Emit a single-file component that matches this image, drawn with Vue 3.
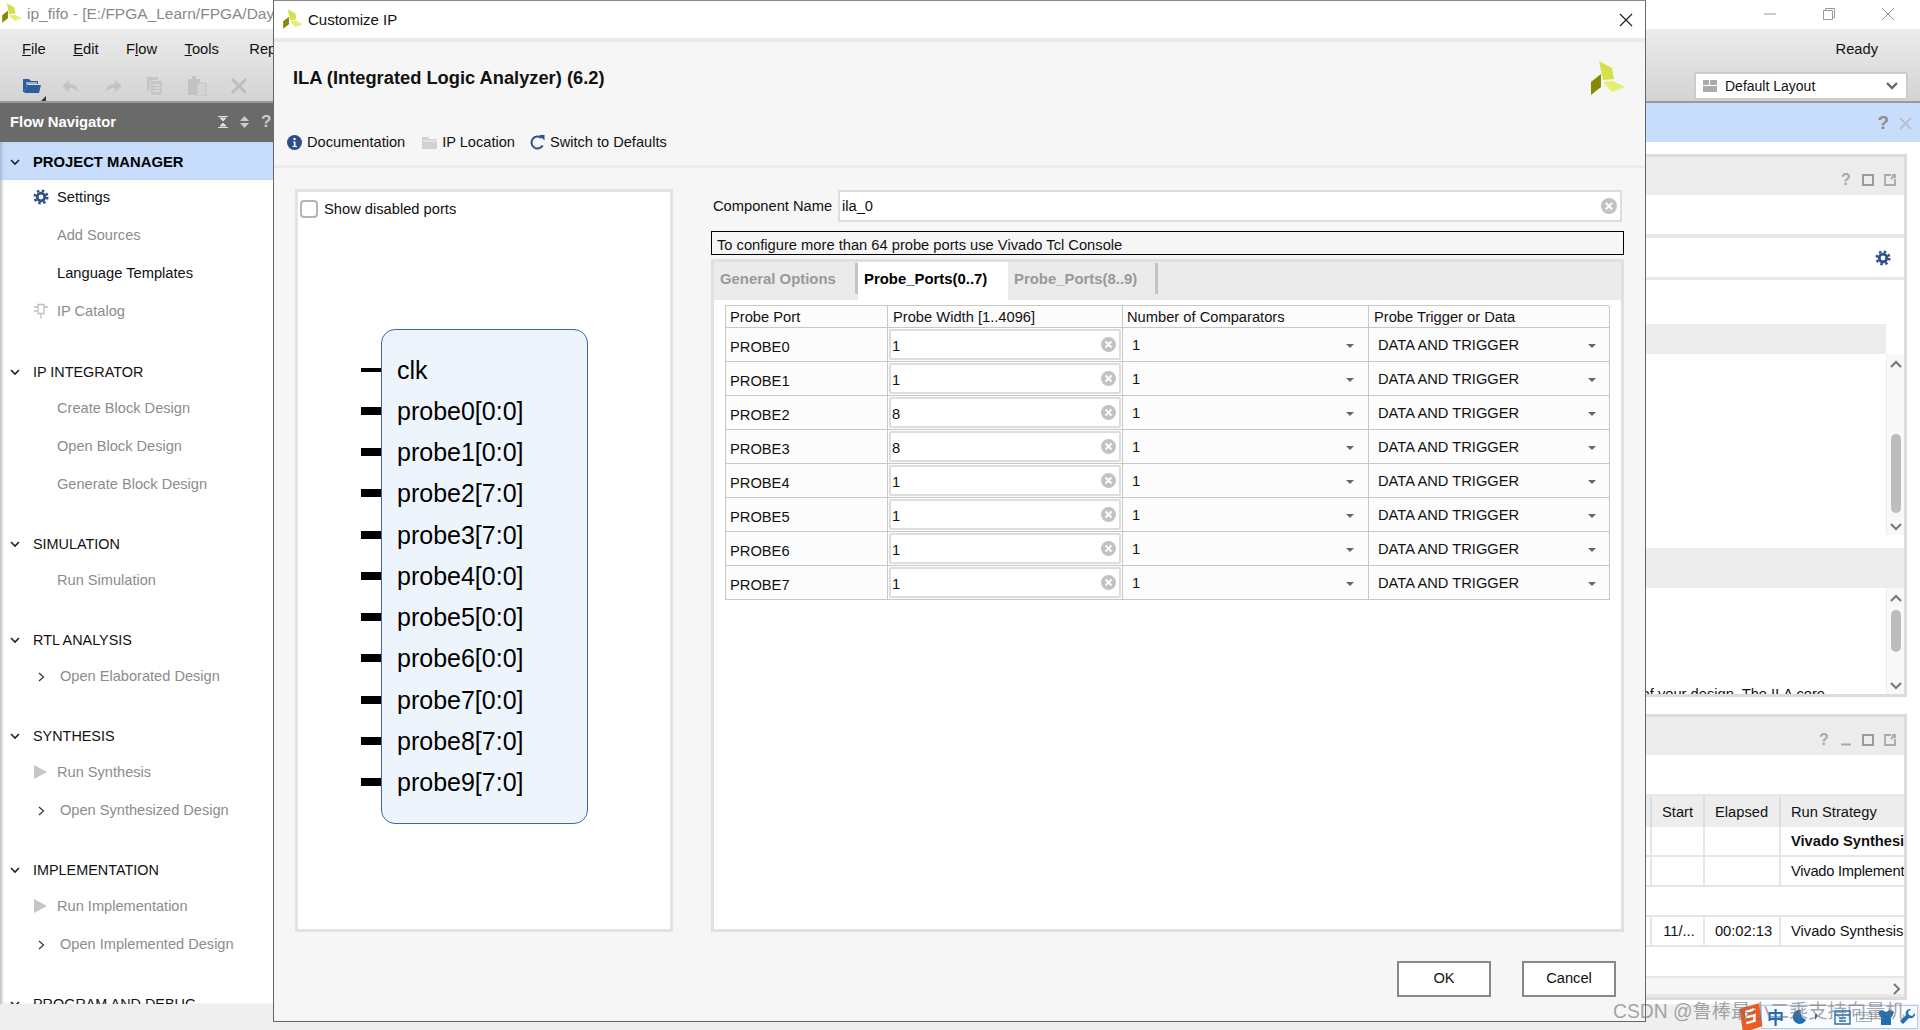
<script setup>
const sections = [
  { title: 'IP INTEGRATOR', items: [{ t: 'Create Block Design' }, { t: 'Open Block Design' }, { t: 'Generate Block Design' }] },
  { title: 'SIMULATION', items: [{ t: 'Run Simulation' }] },
  { title: 'RTL ANALYSIS', items: [{ t: 'Open Elaborated Design', k: 'arrow' }] },
  { title: 'SYNTHESIS', items: [{ t: 'Run Synthesis', k: 'play' }, { t: 'Open Synthesized Design', k: 'arrow' }] },
  { title: 'IMPLEMENTATION', items: [{ t: 'Run Implementation', k: 'play' }, { t: 'Open Implemented Design', k: 'arrow' }] },
  { title: 'PROGRAM AND DEBUG', items: [] }
]
const pins = [
  { n: 'clk', thin: true }, { n: 'probe0[0:0]' }, { n: 'probe1[0:0]' }, { n: 'probe2[7:0]' }, { n: 'probe3[7:0]' },
  { n: 'probe4[0:0]' }, { n: 'probe5[0:0]' }, { n: 'probe6[0:0]' }, { n: 'probe7[0:0]' }, { n: 'probe8[7:0]' }, { n: 'probe9[7:0]' }
]
const probes = [1, 1, 8, 8, 1, 1, 1, 1].map((w, i) => ({ name: 'PROBE' + i, width: w }))
</script>

<template>
  <div class="app">
    <header class="titlebar">
      <svg class="logo-main" viewBox="9 9 38 38"><polygon points="19,11 32,18 34,29 23,30" fill="#d6e04c"/><polygon points="23,32 33,31 45,37 32,42" fill="#e6ee70"/><polygon points="11,32 21,24 21,37 11,45" fill="#858a00"/></svg>
      <span class="win-title">ip_fifo - [E:/FPGA_Learn/FPGA/Day</span>
      <div class="winbtns">
        <svg width="14" height="14" viewBox="0 0 14 14"><path d="M1 7h12" stroke="#999" fill="none"/></svg>
        <svg width="14" height="14" viewBox="0 0 14 14"><path d="M1.5 3.5h9v9h-9zM3.5 3.5v-2h9v9h-2" stroke="#999" fill="none"/></svg>
        <svg width="14" height="14" viewBox="0 0 14 14"><path d="M1 1l12 12M13 1L1 13" stroke="#999" fill="none"/></svg>
      </div>
    </header>

    <div class="chrome">
      <div class="menurow">
        <nav class="menu">
          <span><u>F</u>ile</span><span><u>E</u>dit</span><span>F<u>l</u>ow</span><span><u>T</u>ools</span><span class="rep">Rep</span>
        </nav>
        <span class="ready">Ready</span>
      </div>
      <div class="iconrow">
        <div class="tools">
          <span class="folder-wrap">
            <svg width="20" height="20" viewBox="0 0 20 20"><path d="M1 3h6l2 2h7v3H5L3 16H1z" fill="#2f5c9c"/><path d="M5 9h14l-2 8H2.500z" fill="#2f5c9c"/><path d="M4 7h11" stroke="#fff"/></svg>
            <i class="corner"></i>
          </span>
          <svg class="undo" width="20" height="20" viewBox="0 0 20 20"><path d="M8 4L1 10l7 6v-4c4 0 7 1 9 4 0-6-3-8-9-8z" fill="#c4c4c4"/></svg>
          <svg width="20" height="20" viewBox="0 0 20 20"><path d="M12 4l7 6-7 6v-4c-4 0-7 1-9 4 0-6 3-8 9-8z" fill="#c4c4c4"/></svg>
          <svg width="20" height="20" viewBox="0 0 20 20"><path d="M2 1h11v14H2z" fill="#c6c6c6"/><path d="M5.500 4.500h12v15h-12z" fill="#c6c6c6" stroke="#d8d8d8"/><path d="M8 9h7M8 12h7M8 15h7" stroke="#e2e2e2"/></svg>
          <svg width="20" height="20" viewBox="0 0 20 20"><path d="M1 3h12v16H1z" fill="#c2c2c2"/><path d="M5 0h4v4H5z" fill="#c2c2c2"/><path d="M10 7h9v13h-9z" fill="#d4d4d4" stroke="#c2c2c2"/></svg>
          <svg width="20" height="20" viewBox="0 0 20 20"><path d="M3 3l14 14M17 3L3 17" stroke="#bdbdbd" stroke-width="3" fill="none"/></svg>
          <i class="green"></i>
        </div>
        <div class="layout-combo">
          <svg width="14" height="12" viewBox="0 0 14 12"><path d="M0 0h6v5H0zM7 0h7v5H7zM0 6h14v6H0z" fill="#aaa"/></svg>
          <span>Default Layout</span>
          <svg class="combo-chev" width="14" height="10" viewBox="0 0 14 10"><path d="M2 2l5 5 5-5" stroke="#666" stroke-width="2.400" fill="none"/></svg>
        </div>
      </div>
    </div>

    <main class="body">
      <aside class="nav">
        <div class="nav-head">
          <b>Flow Navigator</b>
          <div class="nav-tools">
            <svg width="10" height="12" viewBox="0 0 10 12"><path d="M0 .5h10M0 11.500h10M5 5L2 2h6zM5 7l-3 3h6z" stroke="#ddd" fill="#ddd" stroke-width="1"/></svg>
            <svg width="9" height="12" viewBox="0 0 9 12"><path d="M4.500 0L9 5H0zM4.500 12L0 7h9z" fill="#ccc"/></svg>
            <b class="q">?</b>
          </div>
        </div>
        <div class="nav-list">
          <div class="sec-head active">
            <svg class="chev" width="10" height="7" viewBox="0 0 10 7"><path d="M1 1l4 4 4-4" stroke="#222" stroke-width="1.600" fill="none"/></svg>
            <b>PROJECT MANAGER</b>
          </div>
          <div class="items first">
            <div class="item dark">
              <svg class="lead" width="16" height="16" viewBox="0 0 16 16"><circle cx="8" cy="8" r="6.300" fill="none" stroke="#2d4f8b" stroke-width="2.500" stroke-dasharray="2.470 2.480"/><circle cx="8" cy="8" r="3.800" fill="none" stroke="#2d4f8b" stroke-width="2.800"/></svg>
              <span>Settings</span>
            </div>
            <div class="item">Add Sources</div>
            <div class="item dark">Language Templates</div>
            <div class="item">
              <svg class="lead" width="16" height="16" viewBox="0 0 16 16"><path d="M5 1.500h6v9H5zM8 10.500v5M1 4h4M1 8h4M11 4h4" stroke="#c0c0c0" stroke-width="1.300" fill="none"/></svg>
              <span>IP Catalog</span>
            </div>
          </div>
          <section v-for="s in sections" :key="s.title" class="sec">
            <div class="sec-head">
              <svg class="chev" width="10" height="7" viewBox="0 0 10 7"><path d="M1 1l4 4 4-4" stroke="#222" stroke-width="1.600" fill="none"/></svg>
              <span>{{ s.title }}</span>
            </div>
            <div v-for="it in s.items" :key="it.t" class="item" :class="{ arrowed: it.k === 'arrow' }">
              <svg v-if="it.k === 'play'" class="lead play" width="13" height="14" viewBox="0 0 13 14"><path d="M0 0l13 7-13 7z" fill="#c6c6c6"/></svg>
              <svg v-if="it.k === 'arrow'" class="lead-arrow" width="7" height="10" viewBox="0 0 7 10"><path d="M1 1l4.500 4L1 9" stroke="#333" stroke-width="1.200" fill="none"/></svg>
              <span>{{ it.t }}</span>
            </div>
          </section>
        </div>
      </aside>

      <div class="workspace">
        <div class="blue-band">
          <b class="bq">?</b>
          <svg width="13" height="13" viewBox="0 0 13 13"><path d="M1 1l11 11M12 1L1 12" stroke="#b8bfca" stroke-width="2" fill="none"/></svg>
        </div>
        <div class="panels">
          <section class="panel p1">
            <div class="phead">
              <b class="pq">?</b>
              <svg width="12" height="12" viewBox="0 0 12 12"><path d="M1 1h10v10H1z" stroke="#999" stroke-width="2" fill="none"/></svg>
              <svg width="12" height="12" viewBox="0 0 12 12"><path d="M7 1H1v10h10V5M7 5l4-4M8 1h3v3" stroke="#aaa" stroke-width="1.800" fill="none"/></svg>
            </div>
            <div class="blank h39 sepb4"></div>
            <div class="gear-row">
              <svg width="16" height="16" viewBox="0 0 16 16"><circle cx="8" cy="8" r="6.300" fill="none" stroke="#2d4f8b" stroke-width="2.500" stroke-dasharray="2.470 2.480"/><circle cx="8" cy="8" r="3.800" fill="none" stroke="#2d4f8b" stroke-width="2.800"/></svg>
            </div>
            <div class="blank h44"></div>
            <div class="greyrow"></div>
            <div class="scrollarea a1">
              <div class="scroll-content"></div>
              <div class="sbar">
                <svg class="sb-chev" width="14" height="8" viewBox="0 0 14 8"><path d="M2 7l5-5 5 5" stroke="#777" stroke-width="2" fill="none"/></svg>
                <i class="thumb t1"></i>
                <svg class="sb-chev end" width="14" height="8" viewBox="0 0 14 8"><path d="M2 1l5 5 5-5" stroke="#777" stroke-width="2" fill="none"/></svg>
              </div>
            </div>
            <div class="blank h13"></div>
            <div class="grey40"></div>
            <div class="scrollarea a2">
              <div class="scroll-content desc"><span>of your design. The ILA core</span></div>
              <div class="sbar">
                <svg class="sb-chev" width="14" height="8" viewBox="0 0 14 8"><path d="M2 7l5-5 5 5" stroke="#777" stroke-width="2" fill="none"/></svg>
                <i class="thumb t2"></i>
                <svg class="sb-chev end" width="14" height="8" viewBox="0 0 14 8"><path d="M2 1l5 5 5-5" stroke="#777" stroke-width="2" fill="none"/></svg>
              </div>
            </div>
          </section>

          <section class="panel p2">
            <div class="phead">
              <b class="pq">?</b>
              <svg width="12" height="12" viewBox="0 0 12 12"><path d="M1 10.500h10" stroke="#aaa" stroke-width="2" fill="none"/></svg>
              <svg width="12" height="12" viewBox="0 0 12 12"><path d="M1 1h10v10H1z" stroke="#999" stroke-width="2" fill="none"/></svg>
              <svg width="12" height="12" viewBox="0 0 12 12"><path d="M7 1H1v10h10V5M7 5l4-4M8 1h3v3" stroke="#aaa" stroke-width="1.800" fill="none"/></svg>
            </div>
            <div class="blank h39 sepb3"></div>
            <div class="runs">
              <div class="rrow rh"><span></span><span>Start</span><span>Elapsed</span><span>Run Strategy</span></div>
              <div class="rrow"><span></span><span></span><span></span><b>Vivado Synthesis</b></div>
              <div class="rrow"><span></span><span></span><span></span><span class="tight">Vivado Implementation</span></div>
              <div class="rrow empty"></div>
              <div class="rrow"><span></span><span class="ctr">11/...</span><span class="ctr">00:02:13</span><span>Vivado Synthesis</span></div>
            </div>
            <div class="blank h31"></div>
            <div class="hscroll">
              <svg width="8" height="12" viewBox="0 0 8 12"><path d="M1 1l5 5-5 5" stroke="#777" stroke-width="2" fill="none"/></svg>
            </div>
          </section>
        </div>
      </div>
    </main>
    <footer class="statusbar"></footer>

    <div class="dialog">
      <div class="dlg-title">
        <svg class="logo-small" viewBox="9 9 38 38"><polygon points="19,11 32,18 34,29 23,30" fill="#d6e04c"/><polygon points="23,32 33,31 45,37 32,42" fill="#e6ee70"/><polygon points="11,32 21,24 21,37 11,45" fill="#858a00"/></svg>
        <span>Customize IP</span>
        <svg class="dlg-close" width="14" height="14" viewBox="0 0 14 14"><path d="M1 1l12 12M13 1L1 13" stroke="#222" stroke-width="1.200" fill="none"/></svg>
      </div>
      <div class="dlg-head">
        <div class="dlg-h1">
          <h1>ILA (Integrated Logic Analyzer) (6.2)</h1>
          <svg class="logo-big" width="60" height="60" viewBox="0 0 60 60"><polygon points="19,11 32,18 34,29 23,30" fill="#d6e04c"/><polygon points="23,32 33,31 45,37 32,42" fill="#e6ee70"/><polygon points="11,32 21,24 21,37 11,45" fill="#858a00"/></svg>
        </div>
        <div class="dlg-links">
          <span class="lnk"><svg width="15" height="15" viewBox="0 0 15 15"><circle cx="7.500" cy="7.500" r="7.500" fill="#2d4f8b"/><path d="M6.500 3h2v2h-2zM6 6.500h2.500V11H10v1H5.500v-1H6.800V7.500H6z" fill="#fff"/></svg>Documentation</span>
          <span class="lnk"><svg width="15" height="13" viewBox="0 0 15 13"><path d="M0 1h6l1.500 2H15v10H0z" fill="#d2d2d2"/><path d="M1 5h14" stroke="#f2f2f2"/></svg>IP Location</span>
          <span class="lnk sw"><svg width="15" height="15" viewBox="0 0 15 15"><path d="M12.700 10.500A6 6 0 1 1 11.500 3" stroke="#2d4f8b" stroke-width="2" fill="none"/><path d="M9 0h5.500v5.500z" fill="#2d4f8b"/></svg>Switch to Defaults</span>
        </div>
      </div>

      <div class="dlg-body">
        <div class="sym-panel">
          <label class="show"><i class="cbx"></i><span>Show disabled ports</span></label>
          <div class="block">
            <div v-for="p in pins" :key="p.n" class="pin">
              <i class="wire" :class="{ thin: p.thin }"></i>
              <span>{{ p.n }}</span>
            </div>
          </div>
        </div>

        <div class="cfg">
          <div class="name-row">
            <span class="name-l">Component Name</span>
            <div class="field">
              <span>ila_0</span>
              <svg class="clr" width="16" height="16" viewBox="0 0 15 15"><circle cx="7.500" cy="7.500" r="7.500" fill="#c2c2c2"/><path d="M4.500 4.500l6 6M10.500 4.500l-6 6" stroke="#fff" stroke-width="1.800"/></svg>
            </div>
          </div>
          <div class="msg">To configure more than 64 probe ports use Vivado Tcl Console</div>
          <div class="tabs">
            <div class="tabstrip">
              <div class="tab">General Options</div>
              <div class="tab on">Probe_Ports(0..7)</div>
              <div class="tab">Probe_Ports(8..9)</div>
            </div>
            <div class="tabbody">
              <div class="grid">
                <div class="c ch">Probe Port</div>
                <div class="c ch">Probe Width [1..4096]</div>
                <div class="c ch">Number of Comparators</div>
                <div class="c ch">Probe Trigger or Data</div>
                <template v-for="p in probes" :key="p.name">
                  <div class="c cn">{{ p.name }}</div>
                  <div class="c cw">
                    <div class="winput">
                      <span>{{ p.width }}</span>
                      <svg width="15" height="15" viewBox="0 0 15 15"><circle cx="7.500" cy="7.500" r="7.500" fill="#c2c2c2"/><path d="M4.500 4.500l6 6M10.500 4.500l-6 6" stroke="#fff" stroke-width="1.800"/></svg>
                    </div>
                  </div>
                  <div class="c cs c3"><span>1</span><i class="tri"></i></div>
                  <div class="c cs c4"><span>DATA AND TRIGGER</span><i class="tri"></i></div>
                </template>
              </div>
            </div>
          </div>
        </div>
      </div>

      <div class="dlg-foot">
        <button class="btn" type="button">OK</button>
        <button class="btn" type="button">Cancel</button>
      </div>
    </div>

    <div class="ime">
      <svg class="sogou" width="28" height="32" viewBox="0 0 22 28"><path d="M1 6L18 1l3 20-17 6z" fill="#ef5a22"/><path d="M15 6L7 8.500v5l7-2v5l-7 2" stroke="#fff" stroke-width="2.200" fill="none"/></svg>
      <span class="zh">中</span>
      <svg width="16" height="16" viewBox="0 0 16 16"><path d="M10 1a7 7 0 1 0 5 10A8 8 0 0 1 10 1z" fill="#1f6fb5"/></svg>
      <svg width="6" height="12" viewBox="0 0 6 12"><path d="M2 3h2v3L2 9z" fill="#1f6fb5"/></svg>
      <svg class="ime-grid" width="17" height="15" viewBox="0 0 17 15"><path d="M1 1h15v13H1zM1 5h15M5 8h7M5 11h7" stroke="#1f6fb5" stroke-width="1.400" fill="none"/></svg>
      <svg class="ime-kb" width="16" height="10" viewBox="0 0 16 10"><path d="M.5.500h15v9H.500zM3 3h10M4 6.500h8" stroke="#9db4c8" fill="none"/></svg>
      <svg width="16" height="15" viewBox="0 0 16 15"><path d="M0 2l4-2 4 2 4-2 4 2-2 5h-1v8H3V7H2z" fill="#1f6fb5"/></svg>
      <svg width="16" height="16" viewBox="0 0 16 16"><path d="M15 4l-3 3-3-1-1-3 3-3a4.500 4.500 0 0 0-5 6L0 12l3 3 6-6a4.500 4.500 0 0 0 6-5z" fill="#1f6fb5"/></svg>
    </div>
    <div class="wm">CSDN @鲁棒最小二乘支持向量机</div>
  </div>
</template>

<style>
html, body { margin: 0; padding: 0; overflow: hidden; }
</style>

<style scoped>
.app {
  position: relative; width: 1920px; height: 1030px; overflow: hidden;
  display: flex; flex-direction: column; background: #fff; color: #111;
  font: 14.7px/1.2 "Liberation Sans", Arial, sans-serif;
}
svg { display: block; flex: none; }
b { font-weight: 700; }

.titlebar { height: 29px; display: flex; align-items: center; flex: none; background: #fff; }
.logo-main { width: 22px; height: 22px; margin-left: 1px; margin-top: -4px; }
.win-title { margin-left: 4px; color: #8a8a8a; font-size: 15.500px; white-space: nowrap; }
.winbtns { margin-left: auto; display: flex; gap: 45px; margin-right: 25px; margin-top: -1px; }

.chrome { height: 74px; flex: none; background: linear-gradient(#ececec, #d3d3d3); border-bottom: 2px solid #9a9a9a; box-sizing: border-box; }
.menurow { height: 38px; box-sizing: border-box; display: flex; align-items: center; padding: 4px 42px 0 22px; justify-content: space-between; }
.menu { display: flex; gap: 27.500px; }
.menu span { white-space: nowrap; }
.menu .rep { margin-left: 3px; }
.iconrow { height: 34px; display: flex; justify-content: space-between; padding-right: 12px; }
.tools { display: flex; gap: 22px; padding-left: 22px; align-items: center; height: 38px; }
.folder-wrap { position: relative; display: block; }
.corner { position: absolute; right: -4px; bottom: -5px; width: 0; height: 0; border-left: 5px solid transparent; border-bottom: 5px solid #333; }
.undo { margin-left: -3px; }
.green { width: 3px; height: 20px; background: #4caf2b; margin-left: 3px; }
.layout-combo {
  width: 214px; height: 28px; box-sizing: border-box; margin-top: 5px; background: #fff;
  border: 2px solid #ccc; border-radius: 2px; display: flex; align-items: center; padding-left: 7px; gap: 8px; font-size: 14px;
}
.combo-chev { margin-left: auto; margin-right: 7px; }

.body { flex: 1; min-height: 0; display: flex; }
.nav { width: 273px; flex: none; display: flex; flex-direction: column; box-shadow: inset 3px 0 3px -1px #bcbcbc; }
.nav-head { height: 39px; box-sizing: border-box; flex: none; background: #6a6a6a; color: #fff; display: flex; align-items: center; padding-left: 10px; font-size: 14.800px; }
.nav-tools { margin-left: auto; display: flex; align-items: center; gap: 12px; width: 55px; }
.q { font-size: 17px; color: #ccc; }
.nav-list { flex: 1; min-height: 0; overflow: hidden; }
.sec-head { height: 34px; box-sizing: border-box; display: flex; align-items: center; padding-left: 10px; color: #111; white-space: nowrap; font-size: 14.400px; }
.sec-head span, .sec-head b { margin-left: 13px; padding-top: 2px; }
.sec-head.active { height: 38px; padding-top: 2px; background: #c8dcfb; box-shadow: inset 3px 0 3px -1px #a9b9d0; font-size: 14.800px; color: #000; }
.chev { width: 10px; }
.sec { margin-bottom: 24px; }
.sec:first-of-type { margin-top: 25px; }
.items.first { margin-top: -2px; }
.item { height: 38px; box-sizing: border-box; padding-top: 2px; display: flex; align-items: center; padding-left: 57px; color: #8c8c8c; white-space: nowrap; position: relative; font-size: 14.600px; }
.item.dark { color: #111; font-size: 14.700px; }
.item.arrowed { padding-left: 60px; }
.lead { position: absolute; left: 33px; top: 11px; }
.lead.play { left: 34px; top: 12px; }
.lead-arrow { position: absolute; left: 38px; top: 15px; }

.workspace { flex: 1; min-width: 0; display: flex; flex-direction: column; }
.blue-band { height: 39px; box-sizing: border-box; padding-top: 1px; flex: none; background: #c8dcfb; display: flex; align-items: center; justify-content: flex-end; padding-right: 8px; gap: 10px; }
.bq { color: #8c8c8c; font-size: 19px; }
.panels { flex: 1; display: flex; flex-direction: column; padding: 12px 13px 4px 60px; gap: 17px; }
.panel { border: 3px solid #dcdcdc; display: flex; flex-direction: column; background: #fff; box-sizing: border-box; }
.p1 { height: 543px; }
.p2 { height: 286px; }
.phead { height: 38px; flex: none; background: #ececec; display: flex; align-items: center; justify-content: flex-end; padding-right: 8px; gap: 10px; padding-top: 8px; box-sizing: border-box; }
.pq { color: #a8a8a8; font-size: 16px; width: 12px; margin-right: -1px; }
.blank { flex: none; background: #fff; box-sizing: content-box; }
.h39 { height: 39px; }
.h44 { height: 44px; }
.h13 { height: 13px; }
.h31 { height: 31px; }
.sepb4 { border-bottom: 4px solid #e8e8e8; }
.sepb3 { border-bottom: 3px solid #e8e8e8; }
.gear-row { height: 39px; flex: none; border-bottom: 3px solid #e8e8e8; display: flex; align-items: center; justify-content: flex-end; padding-right: 13px; }
.greyrow { height: 30px; flex: none; background: #ececec; margin-right: 18px; }
.grey40 { height: 40px; flex: none; background: #ececec; }
.scrollarea { display: flex; flex: none; overflow: hidden; }
.a1 { height: 181px; }
.a2 { height: 106px; }
.scroll-content { flex: 1; min-width: 0; }
.desc { display: flex; flex-direction: column; justify-content: flex-end; align-items: flex-end; padding-right: 61px; margin-bottom: -10px; white-space: nowrap; }
.sbar { width: 18px; flex: none; background: #f8f8f8; border-left: 1px solid #ececec; box-sizing: border-box; display: flex; flex-direction: column; align-items: center; padding: 6px 0 4px; }
.sb-chev.end { margin-top: auto; }
.thumb { display: block; width: 10px; border-radius: 5px; background: #bdbdbd; }
.t1 { height: 79px; margin-top: 66px; }
.t2 { height: 42px; margin-top: 8px; }

.runs { flex: none; }
.rrow { height: 30px; box-sizing: border-box; display: grid; grid-template-columns: 1fr 53px 76px 123px; border-bottom: 2px solid #e6e6e6; align-items: stretch; white-space: nowrap; }
.rrow > * { display: flex; align-items: center; border-right: 2px solid #e6e6e6; padding: 2px 0 0 10px; overflow: hidden; min-width: 0; box-sizing: border-box; }
.rrow > *:last-child { border-right: 0; }
.rrow .ctr { justify-content: center; padding-left: 3px; }
.rrow .tight { letter-spacing: -.25px; }
.rh { background: #ededed; border-bottom: 0; }
.rh > * { border-right-color: #dcdcdc; }
.rrow.empty { display: block; }
.hscroll { height: 16px; flex: none; background: #f6f6f6; border-top: 2px solid #e6e6e6; border-bottom: 3px solid #e8e8e8; box-sizing: content-box; margin-top: -2px; display: flex; align-items: center; justify-content: flex-end; padding-right: 3px; }
.hscroll svg { margin-top: 5px; }

.statusbar { height: 26px; flex: none; background: #efefef; }

.dialog {
  position: absolute; left: 273px; top: 0; width: 1373px; height: 1022px; box-sizing: border-box;
  border: 1px solid #666; border-top-color: #888; background: #f6f6f6; display: flex; flex-direction: column;
}
.dlg-title { height: 41px; flex: none; box-sizing: border-box; background: #fff; border-bottom: 4px solid #ebebeb; display: flex; align-items: center; padding-left: 8px; font-size: 15px; }
.logo-small { width: 22px; height: 22px; margin-top: -2px; margin-right: 4px; }
.dlg-close { margin-left: auto; margin-right: 12px; }
.dlg-head { height: 126px; flex: none; box-sizing: border-box; border-bottom: 3px solid #ebebeb; display: flex; flex-direction: column; padding-left: 14px; }
.dlg-h1 { display: flex; align-items: center; justify-content: space-between; height: 74px; }
h1 { margin: -2px 0 0 5px; font-size: 18.300px; font-weight: 700; }
.logo-big { margin-right: 5px; margin-top: 2px; }
.dlg-links { display: flex; gap: 17px; margin-left: -1px; margin-top: 18px; }
.lnk { display: flex; align-items: center; gap: 5px; font-size: 14.600px; white-space: nowrap; }
.lnk.sw { margin-left: -2px; }

.dlg-body { flex: 1; min-height: 0; display: flex; padding: 21px 21px 0 21px; gap: 38px; }
.sym-panel { width: 378px; flex: none; box-sizing: border-box; border: 3px solid #e3e3e3; background: #fff; display: flex; flex-direction: column; }
.show { display: flex; align-items: center; gap: 6px; padding: 8px 0 0 2px; height: 18px; }
.show span { padding-top: 2px; }
.cbx { display: block; width: 18px; height: 18px; box-sizing: border-box; border: 2px solid #b4b4b4; border-radius: 4px; background: #fff; }
.block {
  margin: 111px 0 0 83px; width: 207px; height: 495px; box-sizing: border-box;
  border: 1px solid #3f66a8; border-radius: 14px; background: #edf4fc; padding: 19px 0 0 15px;
}
.pin { position: relative; height: 41.250px; display: flex; align-items: center; font-size: 25px; color: #000; white-space: nowrap; }
.wire { position: absolute; left: -36px; top: 50%; width: 20px; height: 8px; margin-top: -4px; background: #000; }
.wire.thin { height: 4px; margin-top: -2px; }

.cfg { flex: 1; min-width: 0; display: flex; flex-direction: column; }
.name-row { display: flex; align-items: center; height: 32px; margin-top: 1px; padding-left: 2px; }
.name-l { width: 125px; flex: none; white-space: nowrap; padding-top: 2px; }
.field { flex: 1; margin-right: 2px; height: 32px; box-sizing: border-box; border: 2px solid #ddd; background: #fff; display: flex; align-items: center; padding-left: 2px; justify-content: space-between; padding-right: 3px; }
.field span { padding-top: 2px; }
.msg { margin-top: 9px; height: 24px; box-sizing: border-box; border: 1.500px solid #000; padding: 5px 0 0 5px; line-height: 16px; white-space: nowrap; }
.tabs { flex: 1; margin-top: 4px; min-height: 0; box-sizing: border-box; border: 3px solid #e0e0e0; display: flex; flex-direction: column; background: #fff; }
.tabstrip { height: 38px; flex: none; display: flex; background: #ebebeb; }
.tab { position: relative; display: flex; align-items: center; padding: 0 0 2px 6px; color: #999; font-weight: 700; font-size: 14.900px; white-space: nowrap; box-sizing: border-box; width: 144px; }
.tab::after { content: ""; position: absolute; right: 0; top: 1px; height: 31px; width: 3px; background: #c4c4c4; }
.tab.on { background: #fff; color: #000; width: 150px; }
.tab.on::after { display: none; }
.tab:last-child { width: 150px; }
.tabbody { flex: 1; padding: 5px 0 0 11px; background: #fff; }
.grid { width: 884px; display: grid; grid-template-columns: 162px 235px 246px 241px; grid-template-rows: 22px; grid-auto-rows: 34px; border-left: 1px solid #c8c8c8; border-top: 1px solid #c8c8c8; box-sizing: border-box; background: #fcfcfc; }
.c { border-right: 1px solid #c8c8c8; border-bottom: 1px solid #c8c8c8; display: flex; align-items: center; padding: 3px 0 0 4px; box-sizing: border-box; white-space: nowrap; min-width: 0; }
.ch:nth-child(2), .ch:nth-child(4) { padding-left: 5px; }
.cn { background: #fcfcfc; padding-top: 6px; }
.cw { padding: 1px; }
.winput { flex: 1; height: 100%; box-sizing: border-box; border: 2px solid #ddd; border-radius: 2px; background: #fff; display: flex; align-items: center; justify-content: space-between; padding: 0 3px 0 1px; }
.winput span { padding-top: 4px; }
.cs { justify-content: space-between; padding-top: 2px; padding-bottom: 0; }
.c3 { padding-left: 9px; padding-right: 14px; }
.c4 { padding-left: 9px; padding-right: 13px; }
.tri { width: 0; height: 0; border-left: 4px solid transparent; border-right: 4px solid transparent; border-top: 4px solid #666; }

.dlg-foot { height: 89px; flex: none; box-sizing: border-box; display: flex; justify-content: flex-end; padding: 29px 29px 0 0; gap: 31px; }
.btn { width: 94px; height: 36px; box-sizing: border-box; border: 2px solid #888; background: #fff; color: #111; font: 14.700px "Liberation Sans", Arial, sans-serif; padding: 0 0 2px; border-radius: 0; }

.ime { position: absolute; right: 2px; top: 1005px; width: 157px; height: 24px; box-sizing: border-box; background: #f8fbff; border: 1px solid #b6cbe2; display: flex; align-items: center; gap: 6px; padding-left: 5px; }
.ime-grid { margin-left: 9px; }
.ime-kb { margin-left: -1px; }
.sogou { position: absolute; left: -25px; top: -4px; }
.zh { color: #1f6fb5; font: 700 17px "Noto Sans CJK SC", sans-serif; width: 18px; line-height: 20px; }
.wm { position: absolute; left: 1613px; top: 1000px; font: 19.300px/24px "Liberation Sans", "Noto Sans CJK SC", sans-serif; color: rgba(110, 110, 110, .62); white-space: nowrap; pointer-events: none; }
</style>
